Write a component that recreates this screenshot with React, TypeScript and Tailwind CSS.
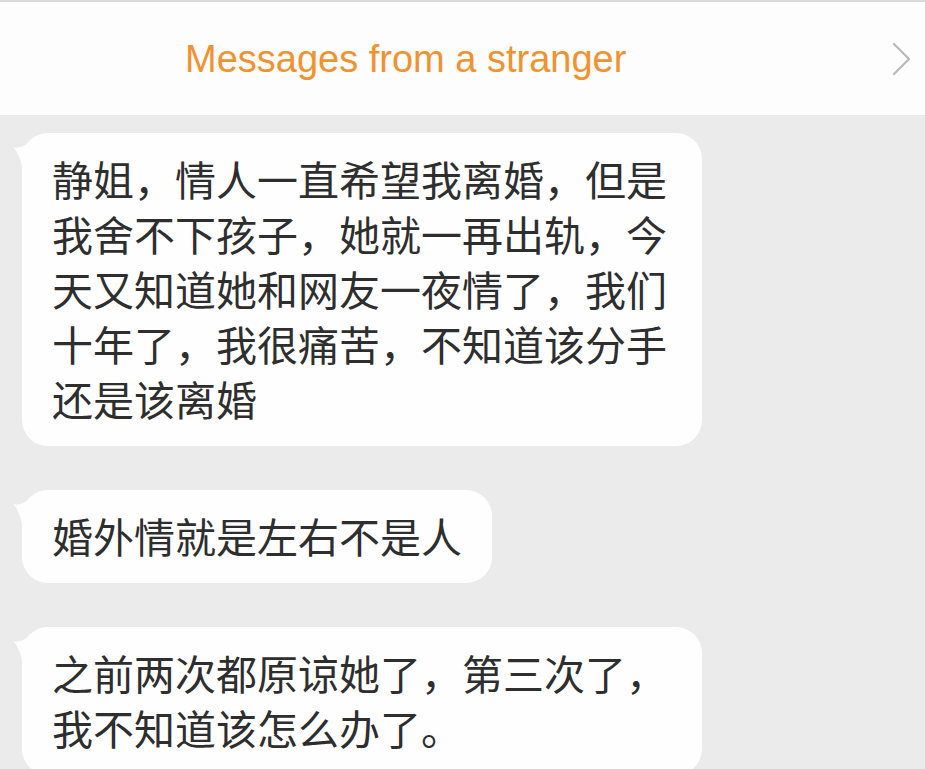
const messages = [
  "静姐，情人一直希望我离婚，但是我舍不下孩子，她就一再出轨，今天又知道她和网友一夜情了，我们十年了，我很痛苦，不知道该分手还是该离婚",
  "婚外情就是左右不是人",
  "之前两次都原谅她了，第三次了，我不知道该怎么办了。",
];

function Bubble({ text }: { text: string }) {
  return (
    <div className="relative w-fit max-w-[680px] rounded-[26px] bg-[#fefefe] px-[30px] pb-[20px] pt-[18px]">
      <svg
        aria-hidden
        className="absolute -left-[10px] top-[8px]"
        width="22"
        height="40"
        viewBox="0 0 22 40"
      >
        <path d="M1 6 Q8 8 16 2 L16 36 L11 36 Q10 15 1 6 Z" fill="#fefefe" />
      </svg>
      <p className="relative text-[41px] leading-[55px] text-[#2e2e2e]">{text}</p>
    </div>
  );
}

export default function App() {
  return (
    <main
      className="h-[769px] w-[925px] overflow-hidden bg-[#ebebeb]"
      style={{ fontFamily: '"Noto Sans CJK SC", "Noto Sans", sans-serif' }}
    >
      <div className="h-[2px] bg-[#dadada]" />
      <header className="flex h-[113px] items-center bg-[#fdfdfd] pl-[185px] pr-[12px]">
        <h1
          className="flex-1 text-[38px] leading-none text-[#f0922f]"
          style={{ fontFamily: '"Liberation Sans", Arial, sans-serif' }}
        >
          Messages from a stranger
        </h1>
        <svg width="22" height="34" viewBox="0 0 22 34" fill="none" aria-hidden>
          <path d="M3 2 L18 17 L3 32" stroke="#b9b9b9" strokeWidth="2.2" strokeLinecap="round" strokeLinejoin="round" />
        </svg>
      </header>
      <div className="flex flex-col gap-[44px] pl-[22px] pt-[18px]">
        {messages.map((m) => (
          <Bubble key={m} text={m} />
        ))}
      </div>
    </main>
  );
}
